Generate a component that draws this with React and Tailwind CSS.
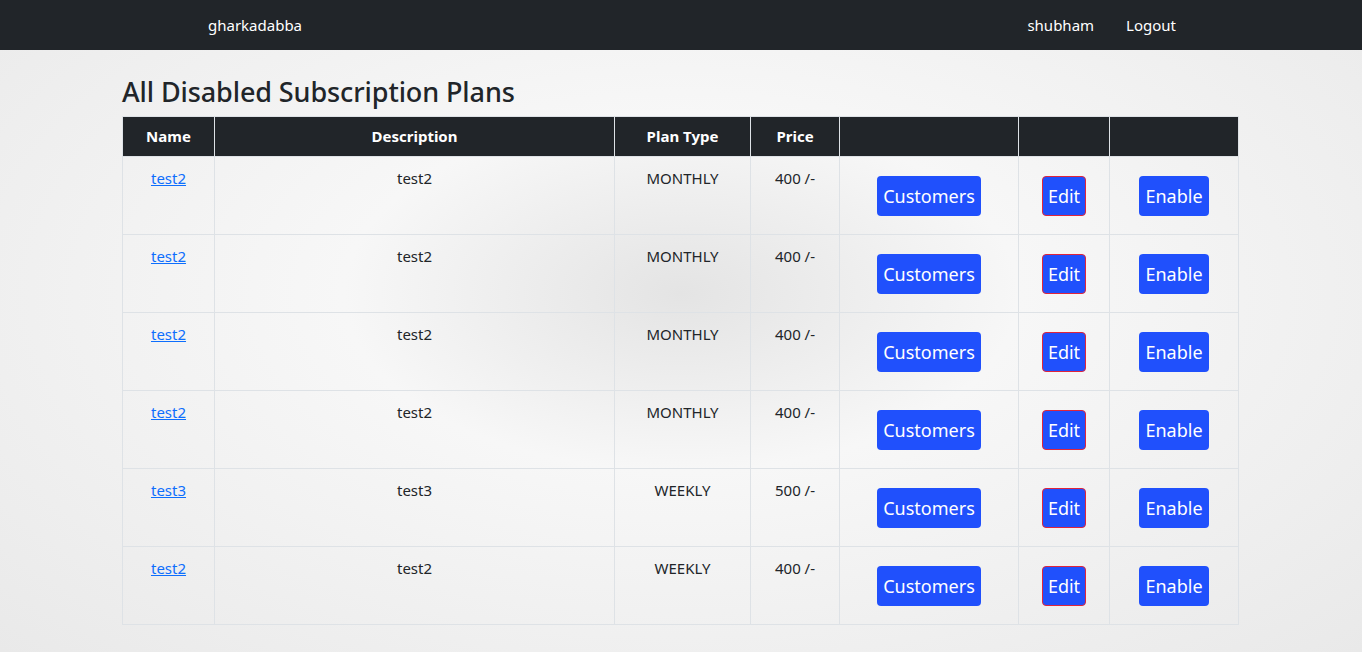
import React from "react";

const rows = [
  { name: "test2", desc: "test2", type: "MONTHLY", price: "400 /-" },
  { name: "test2", desc: "test2", type: "MONTHLY", price: "400 /-" },
  { name: "test2", desc: "test2", type: "MONTHLY", price: "400 /-" },
  { name: "test2", desc: "test2", type: "MONTHLY", price: "400 /-" },
  { name: "test3", desc: "test3", type: "WEEKLY", price: "500 /-" },
  { name: "test2", desc: "test2", type: "WEEKLY", price: "400 /-" },
];

export default function App() {
  return (
    <div className="min-h-[652px] font-['Noto_Sans',sans-serif] text-[#212529] bg-[radial-gradient(ellipse_at_50%_45%,#e4e4e4_0%,#f7f7f7_35%,#e9e9e9_100%)]">
      <nav className="h-[50px] bg-[#212529] flex items-center text-white text-[15px]">
        <div className="pl-[208px]">gharkadabba</div>
        <div className="ml-auto flex gap-[32px] pr-[186px]">
          <span>shubham</span>
          <span>Logout</span>
        </div>
      </nav>
      <div className="px-[122px] pt-[25px]">
        <h1 className="text-[27px] font-medium leading-[33px] mb-[8px] text-[#212529] tracking-[-0.1px]">All Disabled Subscription Plans</h1>
        <table className="w-[1116px] border-collapse text-[15px] text-center table-fixed">
          <colgroup>
            <col className="w-[92px]" />
            <col className="w-[400px]" />
            <col className="w-[136px]" />
            <col className="w-[89px]" />
            <col className="w-[179px]" />
            <col className="w-[91px]" />
            <col className="w-[129px]" />
          </colgroup>
          <thead>
            <tr className="h-[40px] bg-[#212529] text-white font-bold">
              <th className="border border-[#dee2e6]">Name</th>
              <th className="border border-[#dee2e6]">Description</th>
              <th className="border border-[#dee2e6]">Plan Type</th>
              <th className="border border-[#dee2e6]">Price</th>
              <th className="border border-[#dee2e6]"></th>
              <th className="border border-[#dee2e6]"></th>
              <th className="border border-[#dee2e6]"></th>
            </tr>
          </thead>
          <tbody>
            {rows.map((r, i) => (
              <tr key={i} className="h-[78px]">
                <td className="border border-[#dee2e6] align-top pt-[10px]">
                  <a href="#" className="text-[#0d6efd] underline">{r.name}</a>
                </td>
                <td className="border border-[#dee2e6] align-top pt-[10px]">{r.desc}</td>
                <td className="border border-[#dee2e6] align-top pt-[10px]">{r.type}</td>
                <td className="border border-[#dee2e6] align-top pt-[10px]">{r.price}</td>
                <td className="border border-[#dee2e6] align-top pt-[19px]">
                  <button className="h-[40px] px-[6px] bg-[#2050fc] text-white text-[18px] rounded-[4px]">Customers</button>
                </td>
                <td className="border border-[#dee2e6] align-top pt-[19px]">
                  <button className="h-[40px] px-[5px] bg-[#2050fc] text-white text-[18px] rounded-[4px] border border-[#e0243c]">Edit</button>
                </td>
                <td className="border border-[#dee2e6] align-top pt-[19px]">
                  <button className="h-[40px] px-[6px] bg-[#2050fc] text-white text-[18px] rounded-[4px]">Enable</button>
                </td>
              </tr>
            ))}
          </tbody>
        </table>
      </div>
    </div>
  );
}
